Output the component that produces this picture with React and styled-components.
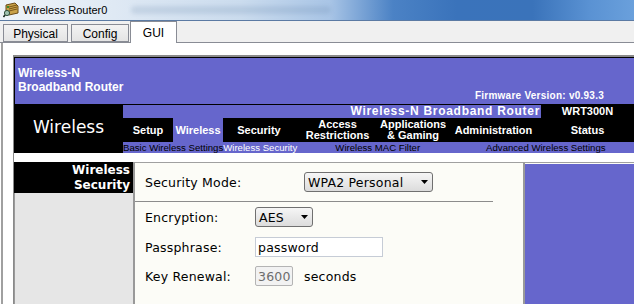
import React from 'react';
import styled, { createGlobalStyle } from 'styled-components';

const GlobalStyle = createGlobalStyle`
  html, body {
    margin: 0;
    padding: 0;
    background: #ffffff;
    overflow: hidden;
  }
`;

const purple = '#6666cc';

const Window = styled.div`
  width: 634px;
  height: 304px;
  overflow: hidden;
  display: flex;
  flex-direction: column;
  background: #ffffff;
  font-family: "Liberation Sans", Arial, sans-serif;
`;

const TitleBar = styled.div`
  height: 20px;
  flex: none;
  display: flex;
  align-items: center;
  padding-left: 3px;
  gap: 4px;
  border-bottom: 1px solid #5b7aa3;
  background: linear-gradient(90deg, #eef3f9 0%, #dfe9f4 18%, #cbdcee 38%, #a9c5e6 52%, #4b82c5 62%, #3a73bb 72%, #3a73ba 84%, #5a92d3 93%, #6aa0dc 100%);
`;

const TitleText = styled.span`
  font-size: 11px;
  color: #000000;
`;

const Smudge = styled.span`
  margin-left: 20px;
  width: 200px;
  height: 8px;
  border-radius: 4px;
  background: rgba(90, 120, 160, 0.18);
  filter: blur(2px);
`;

const TabStrip = styled.div`
  height: 21px;
  flex: none;
  display: flex;
  align-items: flex-end;
  background: #f0f0f0;
  border-bottom: 1px solid #898c95;
  padding-left: 3px;
`;

const Tab = styled.div`
  box-sizing: border-box;
  width: ${p => p.$w}px;
  margin-left: ${p => p.$ml || 0}px;
  height: ${p => (p.$active ? 22 : 18)}px;
  margin-bottom: ${p => (p.$active ? -1 : 0)}px;
  border: 1px solid #898c95;
  border-bottom: ${p => (p.$active ? 'none' : '1px solid #898c95')};
  background: ${p => (p.$active ? '#ffffff' : 'linear-gradient(#f3f3f3, #e4e4e4)')};
  font-size: 12px;
  color: #000;
  display: flex;
  align-items: center;
  justify-content: center;
  padding-top: ${p => (p.$active ? 0 : 1)}px;
`;

const Pane = styled.div`
  flex: 1;
  margin-left: 1px;
  border-left: 2px solid #a0a0a0;
  padding: 12px 0 0 10px;
  background: #ffffff;
  min-height: 0;
`;

const Page = styled.div`
  border-top: 2px solid #8a8a8a;
  border-left: 1px solid #8a8a8a;
  height: 100%;
  display: flex;
  flex-direction: column;
`;

const Banner = styled.div`
  height: 48px;
  box-sizing: border-box;
  border: 1px solid #000;
  border-right: none;
  background: ${purple};
  position: relative;
  padding: 8px 0 0 3px;
  color: #fff;
`;

const BannerTitle = styled.div`
  font-weight: bold;
  font-size: 12px;
  line-height: 14px;
`;

const Firmware = styled.div`
  position: absolute;
  right: 30px;
  bottom: 3px;
  font-weight: bold;
  font-size: 10px;
  letter-spacing: 0.25px;
`;

const NavArea = styled.div`
  display: flex;
  height: 48px;
`;

const SectionBox = styled.div`
  width: 109px;
  background: #000;
  color: #fff;
  font-family: "DejaVu Sans", Verdana, sans-serif;
  font-size: 17px;
  display: flex;
  align-items: center;
  justify-content: center;
  padding-bottom: 4px;
  box-sizing: border-box;
`;

const NavMain = styled.div`
  flex: 1;
  display: flex;
  flex-direction: column;
`;

const HeadRow = styled.div`
  height: 13px;
  display: flex;
  background: ${purple};
`;

const HeadTitle = styled.div`
  flex: 1;
  text-align: right;
  color: #fff;
  font-weight: bold;
  font-size: 12px;
  line-height: 13px;
  letter-spacing: 0.7px;
  padding-right: 1px;
`;

const Model = styled.div`
  width: 93px;
  background: #000;
  color: #fff;
  font-weight: bold;
  font-size: 11px;
  line-height: 13px;
  text-align: center;
`;

const ItemRow = styled.div`
  height: 24px;
  display: flex;
  background: #000;
`;

const NavItem = styled.div`
  width: ${p => p.$w}px;
  background: ${p => (p.$active ? purple : '#000')};
  color: #fff;
  font-weight: bold;
  font-size: 11px;
  line-height: 11px;
  display: flex;
  align-items: center;
  justify-content: center;
  text-align: center;
`;

const SubRow = styled.div`
  height: 11px;
  display: flex;
  background: ${purple};
`;

const SubItem = styled.div`
  margin-left: ${p => p.$ml || 0}px;
  color: ${p => (p.$active ? '#fff' : '#000')};
  font-size: 9.6px;
  line-height: 11px;
  white-space: nowrap;
`;

const Gap = styled.div`
  height: 9px;
`;

const Content = styled.div`
  flex: 1;
  display: flex;
  min-height: 0;
`;

const SideCol = styled.div`
  width: 119px;
  border-right: 2px solid #999;
  display: flex;
  flex-direction: column;
`;

const SideHead = styled.div`
  height: 31px;
  background: #000;
  color: #fff;
  font-family: "DejaVu Sans", Verdana, sans-serif;
  font-weight: bold;
  font-size: 12px;
  line-height: 15px;
  text-align: right;
  padding: 1px 3px 0 0;
  box-sizing: border-box;
`;

const SideFill = styled.div`
  flex: 1;
  background: #e6e6e6;
  border-left: 1px solid #9a9a9a;
`;

const Main = styled.div`
  width: 388px;
  background: #fcfcf7;
  border-top: 1px solid #a0a0a0;
  padding-top: 9px;
  font-family: "DejaVu Sans", Verdana, sans-serif;
  font-size: 12.5px;
  letter-spacing: 0.2px;
  color: #000;
`;

const Row = styled.div`
  display: flex;
  align-items: center;
  height: 20px;
  padding-left: 10px;
  margin-top: ${p => p.$mt || 0}px;
`;

const Label = styled.div`
  width: ${p => p.$w}px;
  flex: none;
`;

const Divider = styled.div`
  width: 358px;
  height: 1px;
  background: #8c8c8c;
  margin-top: 9px;
`;

const Select = styled.div`
  box-sizing: border-box;
  width: ${p => p.$w}px;
  height: 20px;
  border: 1px solid #707070;
  border-radius: 3px;
  background: linear-gradient(#f6f6f6, #e9e9e9 50%, #dcdcdc);
  display: flex;
  align-items: center;
  justify-content: space-between;
  padding: 0 4px 0 3px;
`;

const TextBox = styled.div`
  box-sizing: border-box;
  width: ${p => p.$w}px;
  height: 20px;
  border: 1px solid ${p => (p.$disabled ? '#b4b4b4' : '#c6ccd6')};
  border-radius: ${p => (p.$disabled ? 2 : 0)}px;
  background: ${p => (p.$disabled ? '#f2f2f2' : '#ffffff')};
  color: ${p => (p.$disabled ? '#6d6d6d' : '#000')};
  display: flex;
  align-items: center;
  padding-left: 2px;
`;

const Unit = styled.span`
  margin-left: 11px;
`;

const RightCol = styled.div`
  flex: 1;
  border-left: 2px solid #999;
  border-top: 1px solid #a0a0a0;
  padding-top: 1px;
  background: #fcfcf7;
  display: flex;
`;

const PurpleFill = styled.div`
  flex: 1;
  background: ${purple};
`;

const Arrow = () => (
  <svg width="7" height="4" viewBox="0 0 7 4">
    <path d="M0 0 H7 L3.5 4 Z" fill="#000" />
  </svg>
);

const AppIcon = () => (
  <svg width="16" height="16" viewBox="0 0 16 16">
    <path d="M3 3 L12 1 L15 4 L15 11 L6 13 L3 10 Z" fill="#c9a24a" stroke="#6b4a16" strokeWidth="1" />
    <path d="M6 5 L14 3 M6 7 L14 5 M6 9 L14 7" stroke="#7a5518" strokeWidth="1" />
    <rect x="4" y="4" width="2" height="2" fill="#3c8a2e" />
    <circle cx="4" cy="11" r="2.6" fill="#9fc1b0" stroke="#2f4f3e" strokeWidth="1" />
    <path d="M2 13 L0.5 15" stroke="#1e2e24" strokeWidth="1.6" />
  </svg>
);

const navItems = [
  { w: 50, label: ['Setup'] },
  { w: 50, label: ['Wireless'], active: true },
  { w: 72, label: ['Security'] },
  { w: 85, label: ['Access', 'Restrictions'] },
  { w: 66, label: ['Applications', '& Gaming'] },
  { w: 95, label: ['Administration'] },
  { w: 93, label: ['Status'] },
];

export default function App() {
  return (
    <Window>
      <GlobalStyle />
      <TitleBar>
        <AppIcon />
        <TitleText>Wireless Router0</TitleText>
        <Smudge />
      </TitleBar>
      <TabStrip>
        <Tab $w={65}>Physical</Tab>
        <Tab $w={58} $ml={3}>Config</Tab>
        <Tab $w={47} $ml={1} $active>GUI</Tab>
      </TabStrip>
      <Pane>
        <Page>
          <Banner>
            <BannerTitle>Wireless-N</BannerTitle>
            <BannerTitle>Broadband Router</BannerTitle>
            <Firmware>Firmware Version: v0.93.3</Firmware>
          </Banner>
          <NavArea>
            <SectionBox>Wireless</SectionBox>
            <NavMain>
              <HeadRow>
                <HeadTitle>Wireless-N Broadband Router</HeadTitle>
                <Model>WRT300N</Model>
              </HeadRow>
              <ItemRow>
                {navItems.map(item => (
                  <NavItem key={item.label[0]} $w={item.w} $active={item.active}>
                    <div>
                      {item.label.map(line => (
                        <div key={line}>{line}</div>
                      ))}
                    </div>
                  </NavItem>
                ))}
              </ItemRow>
              <SubRow>
                <SubItem>Basic Wireless Settings</SubItem>
                <SubItem $active>Wireless Security</SubItem>
                <SubItem $ml={38}>Wireless MAC Filter</SubItem>
                <SubItem $ml={66}>Advanced Wireless Settings</SubItem>
              </SubRow>
            </NavMain>
          </NavArea>
          <Gap />
          <Content>
            <SideCol>
              <SideHead>
                Wireless
                <br />
                Security
              </SideHead>
              <SideFill />
            </SideCol>
            <Main>
              <Row>
                <Label $w={159}>Security Mode:</Label>
                <Select $w={129}>
                  <span>WPA2 Personal</span>
                  <Arrow />
                </Select>
              </Row>
              <Divider />
              <Row $mt={5}>
                <Label $w={110}>Encryption:</Label>
                <Select $w={58}>
                  <span>AES</span>
                  <Arrow />
                </Select>
              </Row>
              <Row $mt={10}>
                <Label $w={110}>Passphrase:</Label>
                <TextBox $w={128}>password</TextBox>
              </Row>
              <Row $mt={9}>
                <Label $w={110}>Key Renewal:</Label>
                <TextBox $w={38} $disabled>3600</TextBox>
                <Unit>seconds</Unit>
              </Row>
            </Main>
            <RightCol>
              <PurpleFill />
            </RightCol>
          </Content>
        </Page>
      </Pane>
    </Window>
  );
}
